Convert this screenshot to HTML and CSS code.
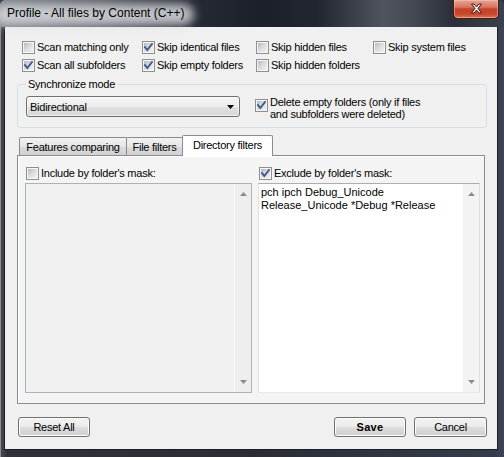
FILE: index.html
```html
<!DOCTYPE html>
<html>
<head>
<meta charset="utf-8">
<title>Profile</title>
<link rel="stylesheet" href="styles.css">
</head>
<body>
<div class="window">
  <div class="titlebar">
    <span class="title">Profile - All files by Content (C++)</span>
    <div class="close">
      <svg width="46" height="19" viewBox="0 0 46 19">
        <path d="M18.5 5 L21 5 L23.5 8 L26 5 L28.5 5 L25 9.5 L28.5 14 L26 14 L23.5 11 L21 14 L18.5 14 L22 9.5 Z" fill="#fff" stroke="#3a1410" stroke-width="1" stroke-linejoin="round"/>
      </svg>
    </div>
  </div>
  <div class="client">
    <div class="opts">
      <label class="chk"><span class="box"></span>Scan matching only</label>
      <label class="chk"><span class="box"><svg viewBox="0 0 11 11"><path d="M2 5.2 L4.3 8 L9 2" class="tick"/></svg></span>Skip identical files</label>
      <label class="chk"><span class="box"></span>Skip hidden files</label>
      <label class="chk"><span class="box"></span>Skip system files</label>
      <label class="chk"><span class="box"><svg viewBox="0 0 11 11"><path d="M2 5.2 L4.3 8 L9 2" class="tick"/></svg></span>Scan all subfolders</label>
      <label class="chk"><span class="box"><svg viewBox="0 0 11 11"><path d="M2 5.2 L4.3 8 L9 2" class="tick"/></svg></span>Skip empty folders</label>
      <label class="chk"><span class="box"></span>Skip hidden folders</label>
    </div>

    <fieldset class="group">
      <legend>Synchronize mode</legend>
      <div class="syncrow">
        <div class="combo">
          <span>Bidirectional</span>
          <svg width="7" height="4" viewBox="0 0 7 4"><path d="M0 0 H7 L3.5 4 Z" fill="#000"/></svg>
        </div>
        <label class="delete"><span class="box"><svg viewBox="0 0 11 11"><path d="M2 5.2 L4.3 8 L9 2" class="tick"/></svg></span><span class="dtext">Delete empty folders (only if files<br>and subfolders were deleted)</span></label>
      </div>
    </fieldset>

    <div class="tabs">
      <div class="tab t1">Features comparing</div>
      <div class="tab t2">File filters</div>
      <div class="tab t3 active">Directory filters</div>
    </div>
    <div class="panel">
      <label class="chk inpanel"><span class="box"></span>Include by folder's mask:</label>
      <label class="chk inpanel"><span class="box"><svg viewBox="0 0 11 11"><path d="M2 5.2 L4.3 8 L9 2" class="tick"/></svg></span>Exclude by folder's mask:</label>
      <div class="edit disabled">
        <div class="text"></div>
        <div class="vscroll">
          <svg width="7" height="4" viewBox="0 0 7 4"><path d="M0 4 H7 L3.5 0 Z"/></svg>
          <svg width="7" height="4" viewBox="0 0 7 4"><path d="M0 0 H7 L3.5 4 Z"/></svg>
        </div>
      </div>
      <div class="edit">
        <div class="text">pch ipch Debug_Unicode Release_Unicode *Debug *Release</div>
        <div class="vscroll">
          <svg width="7" height="4" viewBox="0 0 7 4"><path d="M0 4 H7 L3.5 0 Z"/></svg>
          <svg width="7" height="4" viewBox="0 0 7 4"><path d="M0 0 H7 L3.5 4 Z"/></svg>
        </div>
      </div>
    </div>

    <div class="buttons">
      <button class="btn">Reset All</button>
      <button class="btn save">Save</button>
      <button class="btn cancel">Cancel</button>
    </div>
  </div>
</div>
</body>
</html>
```

FILE: styles.css
```css
* { box-sizing: border-box; }
html, body { margin: 0; padding: 0; }
body {
  width: 504px;
  height: 457px;
  background: #2b2e36;
  font-family: "Liberation Sans", Arial, sans-serif;
  font-size: 11px;
  color: #000;
  overflow: hidden;
}

.window {
  width: 504px;
  height: 457px;
  padding: 0 7px 8px 5px;
  display: flex;
  flex-direction: column;
  border-radius: 6px 6px 0 0;
  background: linear-gradient(90deg, #4a4d54 0, #2f323a 1.5%, #2a2d35 50%, #353b4a 98%, #3d4454 100%);
  box-shadow: inset 1px 0 0 #8a8d93;
}

.titlebar {
  height: 27px;
  margin: 0 -7px 0 -5px;
  display: flex;
  align-items: flex-start;
  isolation: isolate;
  border-radius: 6px 6px 0 0;
  background: linear-gradient(90deg, #7d8188 0, #5b5f67 18%, #262a33 38%, #1c2029 52%, #22262f 63%, #50545c 76%, #454952 82%, #2b2f39 90%, #3a404e 100%);
}
.title {
  position: relative;
  flex: 1;
  padding-left: 7px;
  line-height: 27px;
  font-size: 12px;
  color: #000;
  white-space: nowrap;
}
.title::before {
  content: "";
  position: absolute;
  left: -6px;
  top: 4px;
  width: 200px;
  height: 21px;
  border-radius: 12px;
  background: rgba(214, 217, 221, 0.85);
  filter: blur(5px);
  z-index: -1;
}
.close {
  width: 46px;
  height: 19px;
  margin-right: 5px;
  border: 1px solid #4a1c16;
  border-top: none;
  border-radius: 0 0 5px 5px;
  background: linear-gradient(#e7a597 0, #d8735f 40%, #c3412a 50%, #c84a2f 80%, #dc7a52 100%);
  box-shadow: inset 0 0 0 1px rgba(255, 210, 200, 0.45);
}
.close svg { display: block; margin: -1px 0 0 -1px; }

.client {
  width: 492px;
  height: 422px;
  background: #f0f0f0;
  padding: 14px 10px 12px 12px;
  display: flex;
  flex-direction: column;
  box-shadow: 0 0 0 1px #1c1f26;
}

.opts {
  display: grid;
  grid-template-columns: 120px 114px 117px auto;
  grid-auto-rows: 13px;
  row-gap: 5px;
  margin-left: 5px;
}
.chk {
  display: flex;
  align-items: center;
  gap: 2px;
  line-height: 13px;
  white-space: nowrap;
  letter-spacing: -0.25px;
}

.box {
  position: relative;
  flex: none;
  width: 13px;
  height: 13px;
  padding: 1px;
  border: 1px solid #8e8f8f;
  background: linear-gradient(135deg, #b3b8bf 0%, #d9dbde 45%, #f1f1f2 100%) content-box, #f6f6f6;
}
.box svg {
  position: absolute;
  left: 0;
  top: 0;
  width: 11px;
  height: 11px;
}
.tick {
  fill: none;
  stroke: #41568a;
  stroke-width: 1.9;
  stroke-linecap: square;
  stroke-linejoin: miter;
}

.group {
  margin: 6px 0 0;
  padding: 5px 8px 7px;
  border: 1px solid #d5dfe5;
  border-radius: 3px;
  min-width: 0;
}
.group legend {
  padding: 0 2px;
  line-height: 13px;
  letter-spacing: -0.25px;
}
.syncrow {
  display: flex;
  align-items: flex-start;
}
.combo {
  width: 214px;
  height: 21px;
  border: 1px solid #707070;
  border-radius: 3px;
  background: linear-gradient(#f6f6f6 0, #ececec 50%, #e0e0e0 52%, #d8d8d8 100%);
  box-shadow: inset 0 0 0 1px rgba(255, 255, 255, 0.6);
  display: flex;
  align-items: center;
  justify-content: space-between;
  padding: 0 5px 0 3px;
  letter-spacing: -0.25px;
}
.combo svg { display: block; }
.delete {
  margin-left: 15px;
  display: flex;
  align-items: flex-start;
  gap: 2px;
  line-height: 12px;
  letter-spacing: -0.25px;
}
.delete .box { margin-top: 3px; }

.tabs {
  position: relative;
  z-index: 1;
  display: flex;
  align-items: flex-end;
  height: 20px;
  margin: 7px 0 0 2px;
}
.tab {
  height: 18px;
  padding-top: 3px;
  border: 1px solid #898c95;
  border-bottom: none;
  border-radius: 2px 2px 0 0;
  background: linear-gradient(#f2f2f2 0, #e6e6e6 50%, #dadada 52%, #d2d2d2 100%);
  text-align: center;
  line-height: 13px;
  letter-spacing: -0.25px;
  white-space: nowrap;
}
.tab + .tab { margin-left: -1px; }
.t1 { width: 108px; }
.t2 { width: 57px; }
.t3 { width: 91px; }
.tab.active {
  height: 21px;
  margin-bottom: -1px;
  background: #fff;
}

.panel {
  height: 249px;
  margin-right: 2px;
  border: 1px solid #898c95;
  background: #f4f4f4;
  box-shadow: inset 1px 1px 0 #fff;
  padding: 11px 4px 10px 7px;
  display: grid;
  grid-template-columns: 227px 222px;
  grid-template-rows: 13px 210px;
  column-gap: 6px;
  row-gap: 3px;
}
.inpanel { margin-left: 1px; }

.edit {
  display: flex;
  border: 1px solid;
  border-color: #abadb3 #dbdfe6 #e3e9ef #e2e3ea;
  background: #fff;
}
.edit.disabled {
  border-color: #adb2b5;
  background: #f0f0f0;
}
.edit .text {
  flex: 1;
  padding: 2px 2px;
  line-height: 13px;
  font-size: 11px;
}
.vscroll {
  width: 17px;
  display: flex;
  flex-direction: column;
  justify-content: space-between;
  align-items: center;
  padding: 8px 0 8px;
  background: #eeeeee;
  border-left: 1px solid #fbfbfb;
}
.edit:not(.disabled) .vscroll { background: #f3f3f3; }
.vscroll svg { display: block; fill: #8c8c8c; }

.buttons {
  display: flex;
  margin: 13px 0 0 1px;
}
.btn {
  width: 72px;
  height: 20px;
  padding: 0;
  border: 1px solid #707070;
  border-radius: 3px;
  background: linear-gradient(#f2f2f2 0, #ebebeb 50%, #dddddd 52%, #cfcfcf 100%);
  box-shadow: inset 0 0 0 1px #fcfcfc;
  font-family: "Liberation Sans", Arial, sans-serif;
  font-size: 11px;
  letter-spacing: -0.25px;
  color: #000;
  line-height: 18px;
  text-align: center;
}
.save {
  margin-left: auto;
  font-weight: bold;
  letter-spacing: 0.3px;
}
.cancel {
  width: 73px;
  margin-left: 8px;
}
```
